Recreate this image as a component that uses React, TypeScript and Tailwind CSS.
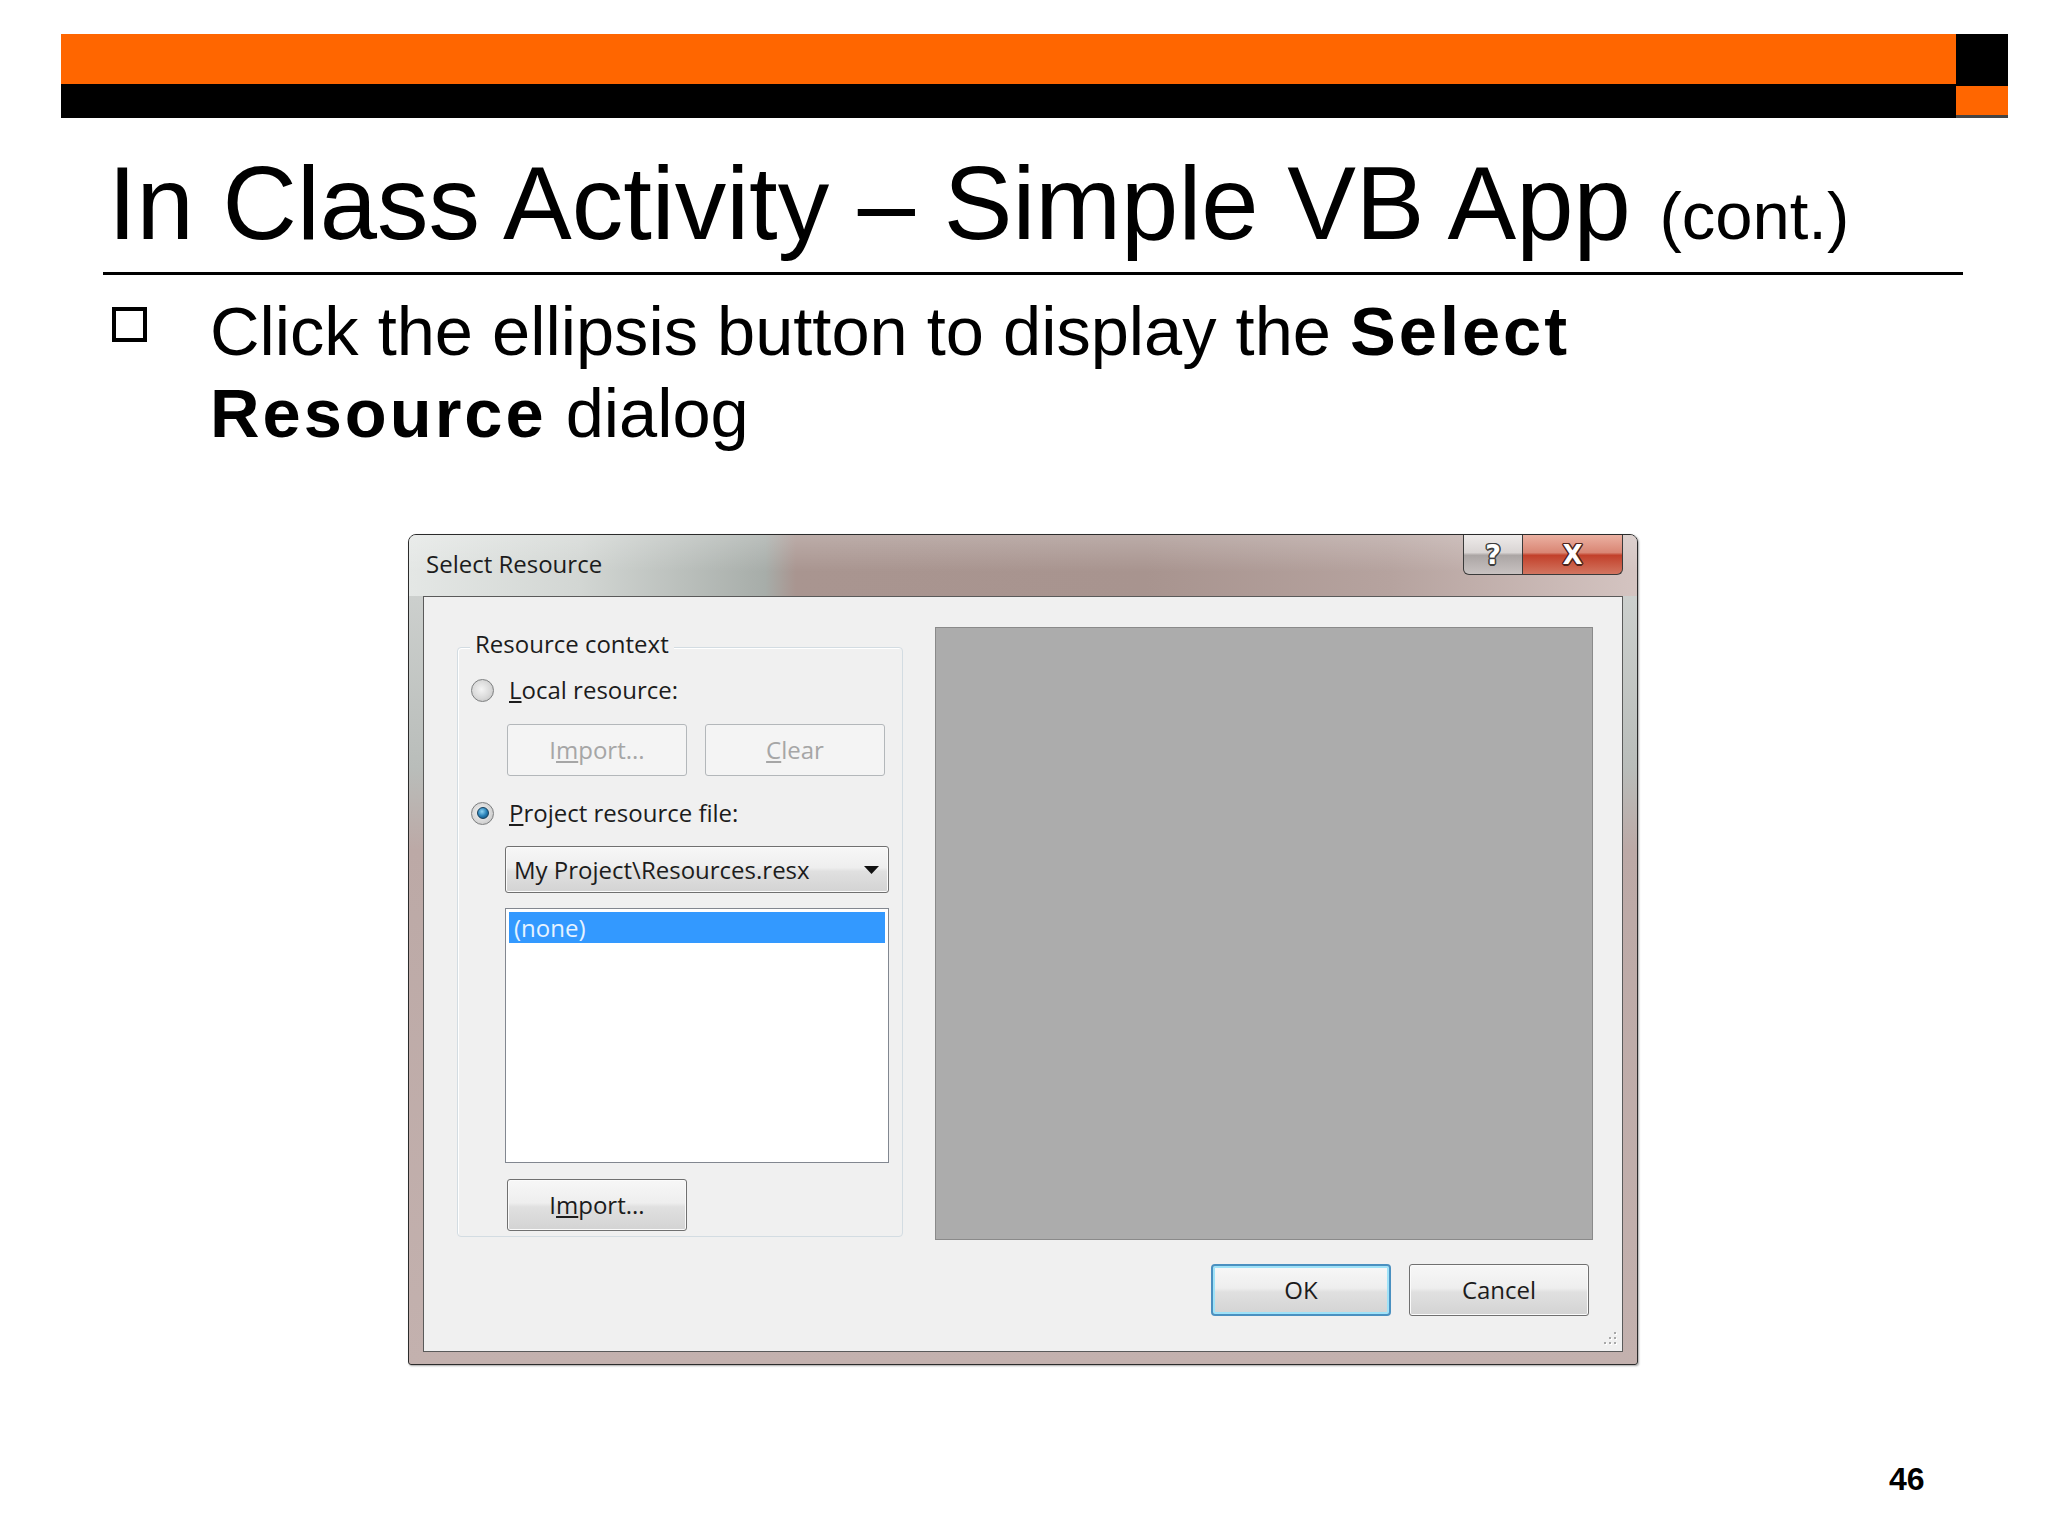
import React from 'react'

const face =
  'bg-[linear-gradient(to_bottom,#f7f7f7_0%,#eeeeee_46%,#e0e0e0_54%,#d3d3d3_100%)]'

function WinButton({
  children,
  disabled,
  primary,
}: {
  children: React.ReactNode
  disabled?: boolean
  primary?: boolean
}) {
  if (disabled) {
    return (
      <div className="w-[180px] h-[52px] shrink-0 rounded-[3px] border border-[#b3b7ba] bg-[#f4f4f4] flex items-center justify-center text-[#a6a6a6]">
        {children}
      </div>
    )
  }
  if (primary) {
    return (
      <div className={`w-[180px] h-[52px] shrink-0 rounded-[4px] border-2 border-[#4a90c0] shadow-[inset_0_0_0_2px_#9fe2f8] ${face} flex items-center justify-center text-[#1c1c1c]`}>
        {children}
      </div>
    )
  }
  return (
    <div className={`w-[180px] h-[52px] shrink-0 rounded-[3px] border border-[#707070] shadow-[inset_0_0_0_1px_#fbfbfb] ${face} flex items-center justify-center text-[#1c1c1c]`}>
      {children}
    </div>
  )
}

function Radio({ checked }: { checked?: boolean }) {
  return (
    <div className="w-[23px] h-[23px] shrink-0 rounded-full border border-[#7d7f80] bg-[radial-gradient(circle_at_45%_45%,#f4f4f4_0%,#d9d9d9_55%,#b9b9b9_100%)] flex items-center justify-center">
      {checked && (
        <div className="w-[12px] h-[12px] rounded-full border border-[#163f5c] bg-[radial-gradient(circle_at_40%_35%,#8fd4f3_0%,#2a82b8_50%,#0b436d_100%)]" />
      )}
    </div>
  )
}

function ResizeGrip() {
  const dots = [
    [10, 0],
    [10, 5],
    [5, 5],
    [10, 10],
    [5, 10],
    [0, 10],
  ]
  return (
    <svg width="14" height="14" viewBox="0 0 14 14">
      {dots.map(([x, y]) => (
        <g key={`${x}-${y}`}>
          <rect x={x + 1} y={y + 1} width="2" height="2" fill="#ffffff" />
          <rect x={x} y={y} width="2" height="2" fill="#a8a8a8" />
        </g>
      ))}
    </svg>
  )
}

function SelectResourceDialog() {
  return (
    <div className="ml-[408px] mt-[79px] w-[1230px] h-[831px] rounded-t-[8px] rounded-b-[3px] border border-[#2b2b2b] bg-[linear-gradient(to_bottom,#d3d6d4_0%,#b9bdba_28%,#bca9a6_38%,#c3b1ae_100%)] flex flex-col font-['Open_Sans',sans-serif] text-[24px] leading-[32px] text-[#1c1c1c] shadow-[1px_1px_2px_rgba(0,0,0,0.35)]">
      {/* title bar */}
      <div className="h-[61px] shrink-0 flex items-start rounded-t-[7px] bg-[linear-gradient(to_bottom,rgba(255,255,255,0.22)_0%,rgba(255,255,255,0)_60%),linear-gradient(to_right,#e4e7e5_0%,#d2d6d3_14%,#a7ada9_29%,#a99590_31.5%,#a8948f_60%,#b6a39f_80%,#d4c4c1_100%)]">
        <span className="flex-1 pl-[17px] pt-[13px]">Select Resource</span>
        <div className="flex mr-[14px]">
          <div className="w-[60px] h-[40px] rounded-bl-[6px] border border-t-0 border-[#3a3a3a] bg-[linear-gradient(to_bottom,#eeebea_0%,#d9d4d3_45%,#aba5a4_52%,#c8c2c1_100%)] flex items-center justify-center font-['DejaVu_Sans',sans-serif] font-bold text-[27px] leading-none text-white [text-shadow:1.5px_0_#3e3e3e,-1.5px_0_#3e3e3e,0_1.5px_#3e3e3e,0_-1.5px_#3e3e3e,1px_1px_#3e3e3e,-1px_-1px_#3e3e3e,1px_-1px_#3e3e3e,-1px_1px_#3e3e3e]">
            ?
          </div>
          <div className="w-[100px] h-[40px] rounded-br-[6px] border border-t-0 border-l-0 border-[#3a3a3a] bg-[linear-gradient(to_bottom,#ebb1a2_0%,#d98674_45%,#c2402a_52%,#d27560_100%)] flex items-center justify-center font-['DejaVu_Sans',sans-serif] font-bold text-[26px] leading-none text-white [text-shadow:1.5px_0_#4f231c,-1.5px_0_#4f231c,0_1.5px_#4f231c,0_-1.5px_#4f231c,1px_1px_#4f231c,-1px_-1px_#4f231c,1px_-1px_#4f231c,-1px_1px_#4f231c]">
            X
          </div>
        </div>
      </div>

      {/* client area */}
      <div className="mx-[14px] mb-[12px] flex-1 border border-[#5a5a5a] bg-[#f0f0f0] flex flex-col">
        <div className="flex items-start pt-[30px] pl-[33px]">
          {/* group box */}
          <div className="relative mt-[20px] w-[446px] h-[590px] rounded-[4px] border border-[#d3dce2] shadow-[inset_1px_1px_0_#ffffff] flex flex-col">
            <span className="absolute -top-[20px] left-[12px] px-[5px] bg-[#f0f0f0]">Resource context</span>

            <div className="mt-[26px] pl-[13px] h-[32px] flex items-center">
              <Radio />
              <span className="ml-[15px]">
                <u>L</u>ocal resource:
              </span>
            </div>

            <div className="mt-[18px] pl-[49px] flex gap-[18px]">
              <WinButton disabled>
                <span>
                  I<u>m</u>port...
                </span>
              </WinButton>
              <WinButton disabled>
                <span>
                  <u>C</u>lear
                </span>
              </WinButton>
            </div>

            <div className="mt-[21px] pl-[13px] h-[32px] flex items-center">
              <Radio checked />
              <span className="ml-[15px]">
                <u>P</u>roject resource file:
              </span>
            </div>

            <div className={`mt-[17px] ml-[47px] w-[384px] h-[47px] rounded-[3px] border border-[#707070] shadow-[inset_0_0_0_1px_#fbfbfb] ${face} flex items-center pl-[8px] pr-[9px]`}>
              <span className="flex-1">My Project\Resources.resx</span>
              <svg width="15" height="8" viewBox="0 0 15 8">
                <path d="M0 0 H15 L7.5 8 Z" fill="#111111" />
              </svg>
            </div>

            <div className="mt-[15px] ml-[47px] w-[384px] h-[255px] border border-[#828790] bg-white p-[3px]">
              <div className="h-[31px] bg-[#3399ff] pl-[5px] flex items-center text-[#e6f3ff]">(none)</div>
            </div>

            <div className="mt-[16px] ml-[49px]">
              <WinButton>
                <span>
                  I<u>m</u>port...
                </span>
              </WinButton>
            </div>
          </div>

          {/* preview */}
          <div className="ml-[32px] w-[658px] h-[613px] border border-[#8a8a8a] bg-[#acacac]" />
        </div>

        <div className="mt-[24px] pr-[33px] flex justify-end gap-[18px]">
          <WinButton primary>OK</WinButton>
          <WinButton>Cancel</WinButton>
        </div>

        <div className="mt-[16px] pr-[4px] flex justify-end">
          <ResizeGrip />
        </div>
      </div>
    </div>
  )
}

export default function App() {
  return (
    <div className="w-[2048px] h-[1536px] bg-white overflow-hidden font-['Liberation_Sans',Arial,sans-serif] text-black">
      {/* header bar */}
      <div className="pt-[34px] pl-[61px] flex">
        <div className="w-[1895px] flex flex-col">
          <div className="h-[50px] bg-[#ff6600]" />
          <div className="h-[34px] bg-black" />
        </div>
        <div className="w-[52px] flex flex-col">
          <div className="h-[52px] bg-black" />
          <div className="h-[29px] bg-[#ff6600]" />
          <div className="h-[3px] bg-[#444444]" />
        </div>
      </div>

      {/* title */}
      <div className="mt-[35px] pl-[108px] text-[103px] leading-[102px] whitespace-nowrap">
        In Class Activity – Simple VB App <span className="text-[67px] leading-[66px]">(cont.)</span>
      </div>
      <div className="mt-[17px] ml-[103px] w-[1860px] h-[3px] bg-black" />

      {/* bullet */}
      <div className="mt-[16px] ml-[112px] flex items-start">
        <div className="mt-[16px] w-[35px] h-[35px] shrink-0 border-[4px] border-black" />
        <div className="ml-[63px] text-[68.6px] leading-[82px] whitespace-nowrap">
          Click the ellipsis button to display the <b className="tracking-[3px]">Select</b>
          <br />
          <b className="tracking-[3px]">Resource</b> dialog
        </div>
      </div>

      <SelectResourceDialog />

      <div className="mt-[98px] ml-[1889px] text-[32px] leading-[32px] font-bold">46</div>
    </div>
  )
}
